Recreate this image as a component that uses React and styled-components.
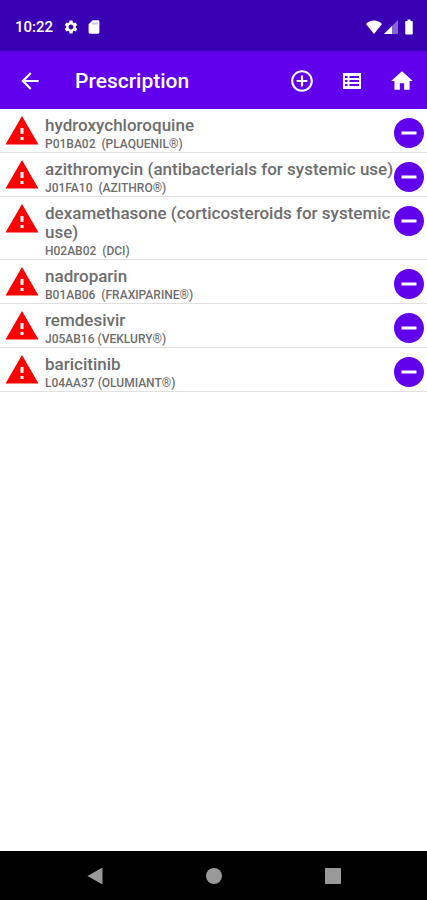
import React from 'react';
import styled, { createGlobalStyle } from 'styled-components';
import {
  MdAddCircleOutline,
  MdArrowBack,
  MdBatteryFull,
  MdHome,
  MdRemoveCircle,
  MdSettings,
  MdWarning,
} from 'react-icons/md';

const drugs = [
  { name: 'hydroxychloroquine', code: 'P01BA02  (PLAQUENIL®)' },
  { name: 'azithromycin (antibacterials for systemic use)', code: 'J01FA10  (AZITHRO®)' },
  { name: 'dexamethasone (corticosteroids for systemic use)', code: 'H02AB02  (DCI)' },
  { name: 'nadroparin', code: 'B01AB06  (FRAXIPARINE®)' },
  { name: 'remdesivir', code: 'J05AB16 (VEKLURY®)' },
  { name: 'baricitinib', code: 'L04AA37 (OLUMIANT®)' },
];

function ListIcon() {
  return (
    <svg width="18" height="16" viewBox="0 0 18 16" fill="currentColor" aria-hidden="true">
      <path
        fillRule="evenodd"
        d="M0 0h18v16H0zM2 3v2h2.500V3zM6.500 3v2H16V3zM2 7v2h2.500V7zM6.500 7v2H16V7zM2 11v2h2.500v-2zM6.500 11v2H16v-2z"
      />
    </svg>
  );
}

function SdCardIcon() {
  return (
    <svg width="16" height="16" viewBox="0 0 16 16" fill="currentColor" aria-hidden="true">
      <path d="M6.700 1.300h5.300c.8 0 1.400.6 1.400 1.400v10.600c0 .8-.6 1.400-1.400 1.400H4c-.8 0-1.400-.6-1.400-1.400V5.300z" />
      <path d="M6.500 3.500h1v2h-1zM8.500 3.500h1v2h-1zM10.500 3.500h1v2h-1z" fill="#3a00b4" opacity="0.5" />
    </svg>
  );
}

function WifiIcon() {
  return (
    <svg width="16" height="14" viewBox="0 0 16 14" fill="currentColor" aria-hidden="true">
      <path d="M8 14 0 4C2 1.800 5 .5 8 .5S14 1.800 16 4z" />
    </svg>
  );
}

function SignalIcon() {
  return (
    <svg width="14" height="14" viewBox="0 0 14 14" fill="currentColor" aria-hidden="true">
      <path d="M0 14 14 0v14z" opacity="0.4" />
      <path d="M0 14 8 6v8z" />
    </svg>
  );
}

function App() {
  return (
    <Screen>
      <GlobalStyle />
      <StatusBar>
        <StatusGroup $gap={7}>
          <Clock>10:22</Clock>
          <MdSettings size={16} />
          <SdCardIcon />
        </StatusGroup>
        <StatusGroup $gap={2}>
          <WifiIcon />
          <SignalIcon />
          <MdBatteryFull size={18} />
        </StatusGroup>
      </StatusBar>
      <AppBar>
        <BarButton aria-label="Back">
          <MdArrowBack size={26} />
        </BarButton>
        <Title>Prescription</Title>
        <BarButton aria-label="Add">
          <MdAddCircleOutline size={26} />
        </BarButton>
        <BarButton aria-label="List">
          <ListIcon />
        </BarButton>
        <BarButton aria-label="Home">
          <MdHome size={26} />
        </BarButton>
      </AppBar>
      <DrugList>
        {drugs.map((drug) => (
          <DrugRow key={drug.name}>
            <WarningIcon size={36} />
            <DrugText>
              <DrugName>{drug.name}</DrugName>
              <DrugCode>{drug.code}</DrugCode>
            </DrugText>
            <RemoveButton aria-label={`Remove ${drug.name}`}>
              <MdRemoveCircle size={36} />
            </RemoveButton>
          </DrugRow>
        ))}
      </DrugList>
      <NavBar>
        <NavButton aria-label="Back">
          <svg width="16" height="18" viewBox="0 0 16 18" fill="currentColor">
            <path d="M15.500.500v17L.500 9z" />
          </svg>
        </NavButton>
        <NavButton aria-label="Home">
          <svg width="16" height="16" viewBox="0 0 16 16" fill="currentColor">
            <circle cx="8" cy="8" r="8" />
          </svg>
        </NavButton>
        <NavButton aria-label="Recent apps">
          <svg width="16" height="16" viewBox="0 0 16 16" fill="currentColor">
            <rect width="16" height="16" rx="1" />
          </svg>
        </NavButton>
      </NavBar>
    </Screen>
  );
}

export default App;

const GlobalStyle = createGlobalStyle`
  * {
    box-sizing: border-box;
  }

  body {
    margin: 0;
    background: #fff;
    font-family: Roboto, sans-serif;
  }

  button {
    display: flex;
    align-items: center;
    justify-content: center;
    padding: 0;
    border: 0;
    background: none;
    cursor: pointer;
  }

  svg {
    display: block;
    flex-shrink: 0;
  }
`;

const Screen = styled.div`
  display: flex;
  flex-direction: column;
  min-height: 100vh;
`;

const StatusBar = styled.div`
  display: flex;
  align-items: center;
  justify-content: space-between;
  height: 51px;
  padding: 2px 9px 0 15px;
  background: #3a00b4;
  color: #fff;
`;

const StatusGroup = styled.div`
  display: flex;
  align-items: center;
  gap: ${(props) => props.$gap}px;
`;

const Clock = styled.span`
  margin-right: 3px;
  font-size: 15px;
  font-weight: 500;
`;

const AppBar = styled.header`
  display: flex;
  align-items: center;
  height: 58px;
  padding: 2px 0 0 5px;
  background: #6000ec;
`;

const BarButton = styled.button`
  width: 50px;
  height: 50px;
  color: #fff;
`;

const Title = styled.h1`
  flex: 1;
  margin: 0;
  padding-left: 20px;
  color: #fff;
  font-size: 21px;
  font-weight: 500;
`;

const DrugList = styled.ul`
  flex: 1;
  margin: 0;
  padding: 0;
  list-style: none;
`;

const DrugRow = styled.li`
  display: flex;
  align-items: flex-start;
  padding: 4px 0 0 4px;
  border-bottom: 1px solid #e0e0e0;
`;

const WarningIcon = styled(MdWarning)`
  color: #fe0000;
`;

/* long names may run into the blank edge of the remove icon */
const DrugText = styled.div`
  flex: 1;
  margin-right: -6px;
  padding: 3px 0 0 5px;
  color: #6e6e6e;
`;

const DrugName = styled.div`
  font-size: 17px;
  font-weight: 500;
  line-height: 19px;
`;

const DrugCode = styled.div`
  margin-top: 2px;
  font-size: 12px;
  font-weight: 500;
  line-height: 15px;
  white-space: pre;
`;

const RemoveButton = styled.button`
  margin-top: 2px;
  color: #6000ec;
`;

const NavBar = styled.nav`
  display: flex;
  align-items: center;
  justify-content: space-around;
  height: 49px;
  padding: 0 35px;
  background: #000;
`;

const NavButton = styled.button`
  width: 48px;
  height: 48px;
  color: #999;
`;
